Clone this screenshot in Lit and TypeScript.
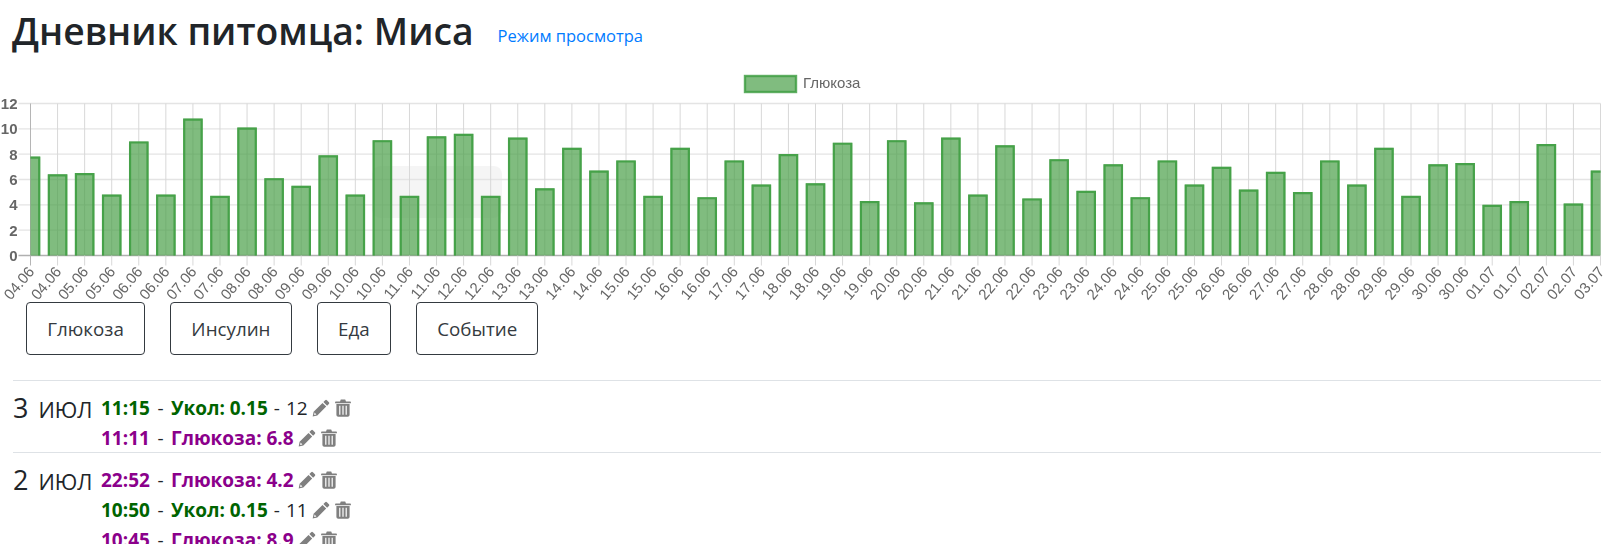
import { LitElement, html, css, svg } from "lit";
import { customElement } from "lit/decorators.js";

const VALUES = [7.8,6.4,6.5,4.8,9,4.8,10.8,4.7,10.1,6.1,5.5,7.9,4.8,9.1,4.7,9.4,9.6,4.7,9.3,5.3,8.5,6.7,7.5,4.7,8.5,4.6,7.5,5.6,8,5.7,8.9,4.3,9.1,4.2,9.3,4.8,8.7,4.5,7.6,5.1,7.2,4.6,7.5,5.6,7,5.2,6.6,5,7.5,5.6,8.5,4.7,7.2,7.3,4,4.3,8.8,4.1,6.7];
const LABELS: string[] = [];
for (let d = 4; d <= 30; d++) { const s = String(d).padStart(2, "0") + ".06"; LABELS.push(s, s); }
LABELS.push("01.07", "01.07", "02.07", "02.07", "03.07");

const X0 = 30.5, X1 = 1600.5, Y0 = 255.5, YT = 103.5;
const STEP = (X1 - X0) / 58;
const yOf = (v: number) => Y0 - (v / 12) * (Y0 - YT);
const BAR = 19.4;

type Entry = { time: string; kind: "ins" | "glu"; label: string; extra?: string };
const DAYS: { num: string; mon: string; entries: Entry[] }[] = [
  { num: "3", mon: "июл", entries: [
    { time: "11:15", kind: "ins", label: "Укол: 0.15", extra: "12" },
    { time: "11:11", kind: "glu", label: "Глюкоза: 6.8" },
  ]},
  { num: "2", mon: "июл", entries: [
    { time: "22:52", kind: "glu", label: "Глюкоза: 4.2" },
    { time: "10:50", kind: "ins", label: "Укол: 0.15", extra: "11" },
    { time: "10:45", kind: "glu", label: "Глюкоза: 8.9" },
  ]},
];

const pencil = html`<svg class="ico pencil" viewBox="0 0 18 18" width="18" height="18" aria-hidden="true"><path d="M13.2 1.2a1.2 1.2 0 0 1 1.7 0l2 2a1.2 1.2 0 0 1 0 1.7l-1.8 1.8-3.7-3.7zM10.5 3.9l3.7 3.7-8.9 8.9-4.6 1 .9-4.7zM2.6 13.6l-.5 2.4 2.3-.5z" fill="#7f7f7f" fill-rule="evenodd"/></svg>`;
const trash = html`<svg class="ico trash" viewBox="0 0 16 18" width="16" height="18" aria-hidden="true"><path d="M5 2.4 5.8.4h4.4l.8 2H15.2a.7.7 0 0 1 .7.7v1.2H.1V3.1a.7.7 0 0 1 .7-.7zM1.4 5h13.2v10.8c0 1.3-.8 2-1.9 2H3.3c-1.1 0-1.9-.7-1.9-2zM4.2 6.8v9h1.2v-9zm3.2 0v9h1.2v-9zm3.2 0v9h1.2v-9z" fill="#7f7f7f" fill-rule="evenodd"/></svg>`;

@customElement("app-root")
export class AppRoot extends LitElement {
  static styles = css`
    :host { display: block; height: 544px; overflow: hidden; background: #fff; color: #212529; font-family: "Open Sans", "Noto Sans", sans-serif; }
    .head { display: flex; align-items: flex-start; padding: 0 12px; height: 60px; box-sizing: border-box; }
    h1 { margin: 7px 0 0; font-size: 37.3px; line-height: 48px; font-weight: 600; }
    .mode { margin: 24px 0 0 24px; color: #007bff; font-size: 16.5px; line-height: 24px; text-decoration: none; }
    .chart { display: block; filter: blur(0.35px); }
    .chart text { font-family: "Liberation Sans", sans-serif; fill: #666; font-size: 15px; }
    .chart .ylab { font-weight: 700; }
    .btns { display: flex; position: relative; gap: 25px; padding: 0 26px; margin-top: -8px; height: 53px; }
    button { height: 53px; padding: 0 20.25px; border: 1px solid #343a40; border-radius: 4px; background: #fff; color: #343a40; font: 400 18.8px "Open Sans", sans-serif; }
    .days { margin: 25px 13px 0; }
    .day { display: flex; border-top: 1px solid #dee2e6; padding-top: 12px; margin-bottom: -1px; }
    .date { width: 88px; flex: none; font-size: 27px; line-height: 30px; font-weight: 400; white-space: nowrap; }
    .date small { font-size: 21.5px; margin-left: 3px; }
    .entries { flex: 1; }
    .entry { display: flex; align-items: center; height: 30px; font-size: 19px; white-space: nowrap; }
    .entry b { font-weight: 700; }
    .ins b { color: #006400; }
    .glu b { color: #8b008b; }
    .sep { margin: 0 7.5px; }
    .sep.tail { margin: 0 6px; }
    .pencil { margin-left: 4px; }
    .trash { margin-left: 5px; }
  `;

  private chart() {
    const gridY = [0, 2, 4, 6, 8, 10, 12];
    return html`<svg class="chart" width="1614" height="250" viewBox="0 60 1614 250">
      ${svg`
      <rect x="372" y="166" width="130" height="52" rx="8" fill="#000" opacity="0.04"/>
      <rect x="745" y="76" width="51" height="16" fill="#4aa049" fill-opacity="0.7" stroke="#43a047" stroke-opacity="0.85" stroke-width="2.4"/>
      <text x="803" y="88">Глюкоза</text>
      ${gridY.map((v) => svg`
        <line x1="${X0 - 12}" x2="${X1}" y1="${yOf(v)}" y2="${yOf(v)}" stroke="${v === 0 ? "#b0b0b0" : "#e4e4e4"}" stroke-width="1.4"/>
        <text class="ylab" x="17.5" y="${yOf(v) + 5.5}" text-anchor="end">${v}</text>`)}
      ${LABELS.map((_, i) => {
        const x = X0 + STEP * i;
        return svg`<line x1="${x}" x2="${x}" y1="${YT}" y2="${Y0 + 10}" stroke="${i === 0 ? "#b5b5b5" : "#d8d8d8"}" stroke-width="1"/>`;
      })}
      ${VALUES.map((v, i) => {
        const cx = X0 + STEP * i;
        const l = Math.max(X0, cx - BAR / 2), r = Math.min(X1, cx + BAR / 2), t = yOf(v);
        const left = l === X0 ? `M${l} ${t + 1}` : `M${l + 1} ${Y0} V${t + 1}`;
        const right = r === X1 ? `H${r}` : `H${r - 1} V${Y0}`;
        return svg`<rect x="${l}" y="${t}" width="${r - l}" height="${Y0 - t}" fill="#4aa049" fill-opacity="0.7"/>
        <path d="${left} ${right}" fill="none" stroke="#43a047" stroke-width="2.2" opacity="0.95"/>`;
      })}
      ${LABELS.map((l, i) => {
        const x = X0 + STEP * i + 4.5;
        return svg`<text x="${x}" y="272" text-anchor="end" transform="rotate(-50 ${x} 272)">${l}</text>`;
      })}
      `}
    </svg>`;
  }

  render() {
    return html`
      <div class="head"><h1>Дневник питомца: Миса</h1><a class="mode" href="#">Режим просмотра</a></div>
      ${this.chart()}
      <div class="btns">
        <button>Глюкоза</button><button>Инсулин</button><button>Еда</button><button>Событие</button>
      </div>
      <div class="days">
        ${DAYS.map((d) => html`<div class="day">
          <div class="date">${d.num} <small>ИЮЛ</small></div>
          <div class="entries">
            ${d.entries.map((e) => html`<div class="entry ${e.kind}">
              <b>${e.time}</b><span class="sep">-</span><b>${e.label}</b>
              ${e.extra ? html`<span class="sep tail">-</span><span>${e.extra}</span>` : ""}
              ${pencil}${trash}
            </div>`)}
          </div>
        </div>`)}
      </div>
    `;
  }
}
